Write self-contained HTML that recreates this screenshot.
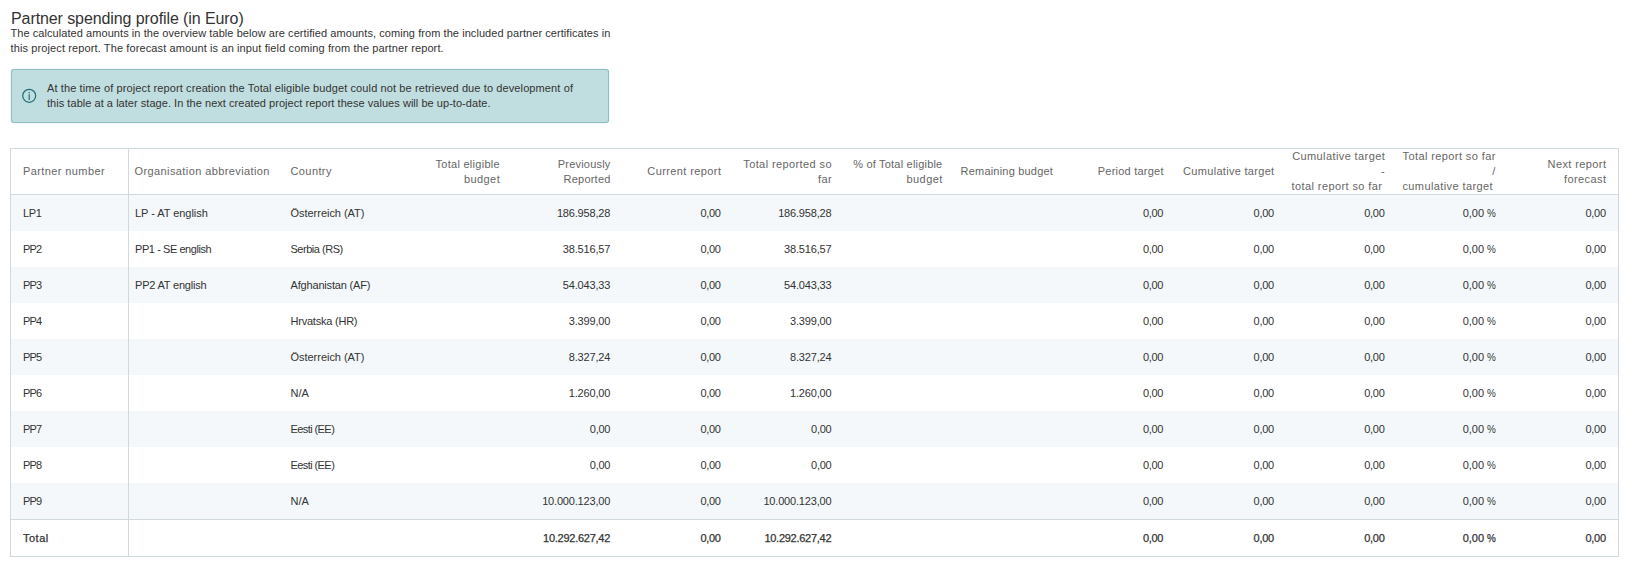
<!DOCTYPE html>
<html><head><meta charset="utf-8">
<style>
*{margin:0;padding:0;box-sizing:border-box}
html,body{width:1633px;height:571px;background:#fff;overflow:hidden}
body{font-family:"Liberation Sans",sans-serif;color:#333;position:relative;font-size:11px}
.a{position:absolute;white-space:nowrap}
.title{left:11px;top:6.6px;font-size:16px;line-height:24px;color:#333;letter-spacing:-0.09px}
.desc{left:10.5px;font-size:11px;line-height:15px;color:#333}
.info{left:11px;top:69px;width:598px;height:54px;background:#c0dddf;border:1px solid #8dbfc0;border-radius:3px;box-shadow:0 0 1px 0 rgba(70,140,140,0.55)}
.it{left:47px;font-size:11px;line-height:15px;color:#333}
.h{color:#666;line-height:15px;letter-spacing:0.4px;text-align:right}
.hl{text-align:left}
.d{line-height:36px;height:36px;text-align:right}
.dl{text-align:left}
.b{-webkit-text-stroke:0.25px #333;color:#333}
.hb{background:#d0d9dd}
</style></head><body>

<div class="a title">Partner spending profile (in Euro)</div>
<div class="a desc" style="top:26px;letter-spacing:0.066px">The calculated amounts in the overview table below are certified amounts, coming from the included partner certificates in</div>
<div class="a desc" style="top:41px;letter-spacing:0.115px">this project report. The forecast amount is an input field coming from the partner report.</div>
<div class="a info"></div>
<svg class="a" style="left:21px;top:88px" width="16" height="16" viewBox="0 0 16 16"><circle cx="8.2" cy="7.8" r="6.5" fill="none" stroke="#1f6f75" stroke-width="1.25"/><rect x="7.6" y="6.3" width="1.2" height="5.7" fill="#1f6f75"/><rect x="7.6" y="4" width="1.2" height="1.3" fill="#1f6f75"/></svg>
<div class="a it" style="top:81px;letter-spacing:0.11px">At the time of project report creation the Total eligible budget could not be retrieved due to development of</div>
<div class="a it" style="top:96px;letter-spacing:0.04px">this table at a later stage. In the next created project report these values will be up-to-date.</div>
<div class="a" style="left:11px;top:195px;width:1607px;height:36px;background:#f4f8fa"></div>
<div class="a" style="left:11px;top:267px;width:1607px;height:36px;background:#f4f8fa"></div>
<div class="a" style="left:11px;top:339px;width:1607px;height:36px;background:#f4f8fa"></div>
<div class="a" style="left:11px;top:411px;width:1607px;height:36px;background:#f4f8fa"></div>
<div class="a" style="left:11px;top:483px;width:1607px;height:36px;background:#f4f8fa"></div>
<div class="a hb" style="left:10px;top:148px;width:1609px;height:1px"></div>
<div class="a hb" style="left:10px;top:194px;width:1609px;height:1px"></div>
<div class="a hb" style="left:10px;top:519px;width:1609px;height:1px"></div>
<div class="a hb" style="left:10px;top:556px;width:1609px;height:1px"></div>
<div class="a hb" style="left:10px;top:148px;width:1px;height:409px"></div>
<div class="a hb" style="left:128px;top:148px;width:1px;height:409px"></div>
<div class="a hb" style="left:1618px;top:148px;width:1px;height:409px"></div>
<div class="a h hl" style="left:23px;top:164px">Partner number</div>
<div class="a h hl" style="left:134.5px;top:164px">Organisation abbreviation</div>
<div class="a h hl" style="left:290.5px;top:164px">Country</div>
<div class="a h" style="right:1133.3px;top:156.5px"><div style="letter-spacing:0.28px;margin-right:-0.28px">Total eligible</div><div style="letter-spacing:0.4px;margin-right:-0.4px">budget</div></div>
<div class="a h" style="right:1022.67px;top:156.5px"><div style="letter-spacing:0.2px;margin-right:-0.2px">Previously</div><div style="letter-spacing:0.21px;margin-right:-0.21px">Reported</div></div>
<div class="a h" style="right:912.04px;top:164.0px"><div style="letter-spacing:0.4px;margin-right:-0.4px">Current report</div></div>
<div class="a h" style="right:801.41px;top:156.5px"><div style="letter-spacing:0.4px;margin-right:-0.4px">Total reported so</div><div style="letter-spacing:0.4px;margin-right:-0.4px">far</div></div>
<div class="a h" style="right:690.78px;top:156.5px"><div style="letter-spacing:0.2px;margin-right:-0.2px">% of Total eligible</div><div style="letter-spacing:0.4px;margin-right:-0.4px">budget</div></div>
<div class="a h" style="right:580.1500000000001px;top:164.0px"><div style="letter-spacing:0.2px;margin-right:-0.2px">Remaining budget</div></div>
<div class="a h" style="right:469.52px;top:164.0px"><div style="letter-spacing:0.23px;margin-right:-0.23px">Period target</div></div>
<div class="a h" style="right:358.8899999999999px;top:164.0px"><div style="letter-spacing:0.3px;margin-right:-0.3px">Cumulative target</div></div>
<div class="a h" style="right:248.26px;top:149.0px"><div style="letter-spacing:0.4px;margin-right:-0.4px">Cumulative target</div><div style="letter-spacing:0.4px;margin-right:-0.4px">-</div><div style="letter-spacing:0.4px;margin-right:2.4px">total report so far</div></div>
<div class="a h" style="right:137.6300000000001px;top:149.0px"><div style="letter-spacing:0.4px;margin-right:-0.4px">Total report so far</div><div style="letter-spacing:0.4px;margin-right:-0.4px">/</div><div style="letter-spacing:0.4px;margin-right:2.4px">cumulative target</div></div>
<div class="a h" style="right:27.0px;top:156.5px"><div style="letter-spacing:0.4px;margin-right:-0.4px">Next report</div><div style="letter-spacing:0.4px;margin-right:-0.4px">forecast</div></div>
<div class="a d dl" style="left:23px;top:195px;letter-spacing:-0.4px">LP1</div>
<div class="a d dl" style="left:135px;top:195px;letter-spacing:-0.04px">LP - AT english</div>
<div class="a d dl" style="left:290.5px;top:195px;letter-spacing:-0.03px">Österreich (AT)</div>
<div class="a d" style="right:1022.8499999999999px;top:195px;letter-spacing:-0.18px">186.958,28</div>
<div class="a d" style="right:912.3399999999999px;top:195px;letter-spacing:-0.3px">0,00</div>
<div class="a d" style="right:801.5899999999999px;top:195px;letter-spacing:-0.18px">186.958,28</div>
<div class="a d" style="right:469.82px;top:195px;letter-spacing:-0.3px">0,00</div>
<div class="a d" style="right:359.1899999999999px;top:195px;letter-spacing:-0.3px">0,00</div>
<div class="a d" style="right:248.56px;top:195px;letter-spacing:-0.3px">0,00</div>
<div class="a d" style="right:137.6300000000001px;top:195px">0,00 <span style="display:inline-block;transform:scaleX(0.9);transform-origin:100% 50%;letter-spacing:0;margin-left:-1.5px">%</span></div>
<div class="a d" style="right:27.3px;top:195px;letter-spacing:-0.3px">0,00</div>
<div class="a d dl" style="left:23px;top:231px;letter-spacing:-0.8px">PP2</div>
<div class="a d dl" style="left:135px;top:231px;letter-spacing:-0.43px">PP1 - SE english</div>
<div class="a d dl" style="left:290.5px;top:231px;letter-spacing:-0.48px">Serbia (RS)</div>
<div class="a d" style="right:1022.8499999999999px;top:231px;letter-spacing:-0.18px">38.516,57</div>
<div class="a d" style="right:912.3399999999999px;top:231px;letter-spacing:-0.3px">0,00</div>
<div class="a d" style="right:801.5899999999999px;top:231px;letter-spacing:-0.18px">38.516,57</div>
<div class="a d" style="right:469.82px;top:231px;letter-spacing:-0.3px">0,00</div>
<div class="a d" style="right:359.1899999999999px;top:231px;letter-spacing:-0.3px">0,00</div>
<div class="a d" style="right:248.56px;top:231px;letter-spacing:-0.3px">0,00</div>
<div class="a d" style="right:137.6300000000001px;top:231px">0,00 <span style="display:inline-block;transform:scaleX(0.9);transform-origin:100% 50%;letter-spacing:0;margin-left:-1.5px">%</span></div>
<div class="a d" style="right:27.3px;top:231px;letter-spacing:-0.3px">0,00</div>
<div class="a d dl" style="left:23px;top:267px;letter-spacing:-0.8px">PP3</div>
<div class="a d dl" style="left:135px;top:267px;letter-spacing:-0.19px">PP2 AT english</div>
<div class="a d dl" style="left:290.5px;top:267px;letter-spacing:-0.17px">Afghanistan (AF)</div>
<div class="a d" style="right:1022.8499999999999px;top:267px;letter-spacing:-0.18px">54.043,33</div>
<div class="a d" style="right:912.3399999999999px;top:267px;letter-spacing:-0.3px">0,00</div>
<div class="a d" style="right:801.5899999999999px;top:267px;letter-spacing:-0.18px">54.043,33</div>
<div class="a d" style="right:469.82px;top:267px;letter-spacing:-0.3px">0,00</div>
<div class="a d" style="right:359.1899999999999px;top:267px;letter-spacing:-0.3px">0,00</div>
<div class="a d" style="right:248.56px;top:267px;letter-spacing:-0.3px">0,00</div>
<div class="a d" style="right:137.6300000000001px;top:267px">0,00 <span style="display:inline-block;transform:scaleX(0.9);transform-origin:100% 50%;letter-spacing:0;margin-left:-1.5px">%</span></div>
<div class="a d" style="right:27.3px;top:267px;letter-spacing:-0.3px">0,00</div>
<div class="a d dl" style="left:23px;top:303px;letter-spacing:-0.8px">PP4</div>
<div class="a d dl" style="left:290.5px;top:303px;letter-spacing:-0.22px">Hrvatska (HR)</div>
<div class="a d" style="right:1022.8499999999999px;top:303px;letter-spacing:-0.18px">3.399,00</div>
<div class="a d" style="right:912.3399999999999px;top:303px;letter-spacing:-0.3px">0,00</div>
<div class="a d" style="right:801.5899999999999px;top:303px;letter-spacing:-0.18px">3.399,00</div>
<div class="a d" style="right:469.82px;top:303px;letter-spacing:-0.3px">0,00</div>
<div class="a d" style="right:359.1899999999999px;top:303px;letter-spacing:-0.3px">0,00</div>
<div class="a d" style="right:248.56px;top:303px;letter-spacing:-0.3px">0,00</div>
<div class="a d" style="right:137.6300000000001px;top:303px">0,00 <span style="display:inline-block;transform:scaleX(0.9);transform-origin:100% 50%;letter-spacing:0;margin-left:-1.5px">%</span></div>
<div class="a d" style="right:27.3px;top:303px;letter-spacing:-0.3px">0,00</div>
<div class="a d dl" style="left:23px;top:339px;letter-spacing:-0.8px">PP5</div>
<div class="a d dl" style="left:290.5px;top:339px;letter-spacing:-0.03px">Österreich (AT)</div>
<div class="a d" style="right:1022.8499999999999px;top:339px;letter-spacing:-0.18px">8.327,24</div>
<div class="a d" style="right:912.3399999999999px;top:339px;letter-spacing:-0.3px">0,00</div>
<div class="a d" style="right:801.5899999999999px;top:339px;letter-spacing:-0.18px">8.327,24</div>
<div class="a d" style="right:469.82px;top:339px;letter-spacing:-0.3px">0,00</div>
<div class="a d" style="right:359.1899999999999px;top:339px;letter-spacing:-0.3px">0,00</div>
<div class="a d" style="right:248.56px;top:339px;letter-spacing:-0.3px">0,00</div>
<div class="a d" style="right:137.6300000000001px;top:339px">0,00 <span style="display:inline-block;transform:scaleX(0.9);transform-origin:100% 50%;letter-spacing:0;margin-left:-1.5px">%</span></div>
<div class="a d" style="right:27.3px;top:339px;letter-spacing:-0.3px">0,00</div>
<div class="a d dl" style="left:23px;top:375px;letter-spacing:-0.8px">PP6</div>
<div class="a d dl" style="left:290.5px;top:375px">N/A</div>
<div class="a d" style="right:1022.8499999999999px;top:375px;letter-spacing:-0.18px">1.260,00</div>
<div class="a d" style="right:912.3399999999999px;top:375px;letter-spacing:-0.3px">0,00</div>
<div class="a d" style="right:801.5899999999999px;top:375px;letter-spacing:-0.18px">1.260,00</div>
<div class="a d" style="right:469.82px;top:375px;letter-spacing:-0.3px">0,00</div>
<div class="a d" style="right:359.1899999999999px;top:375px;letter-spacing:-0.3px">0,00</div>
<div class="a d" style="right:248.56px;top:375px;letter-spacing:-0.3px">0,00</div>
<div class="a d" style="right:137.6300000000001px;top:375px">0,00 <span style="display:inline-block;transform:scaleX(0.9);transform-origin:100% 50%;letter-spacing:0;margin-left:-1.5px">%</span></div>
<div class="a d" style="right:27.3px;top:375px;letter-spacing:-0.3px">0,00</div>
<div class="a d dl" style="left:23px;top:411px;letter-spacing:-0.8px">PP7</div>
<div class="a d dl" style="left:290.5px;top:411px;letter-spacing:-0.58px">Eesti (EE)</div>
<div class="a d" style="right:1022.9699999999999px;top:411px;letter-spacing:-0.3px">0,00</div>
<div class="a d" style="right:912.3399999999999px;top:411px;letter-spacing:-0.3px">0,00</div>
<div class="a d" style="right:801.7099999999999px;top:411px;letter-spacing:-0.3px">0,00</div>
<div class="a d" style="right:469.82px;top:411px;letter-spacing:-0.3px">0,00</div>
<div class="a d" style="right:359.1899999999999px;top:411px;letter-spacing:-0.3px">0,00</div>
<div class="a d" style="right:248.56px;top:411px;letter-spacing:-0.3px">0,00</div>
<div class="a d" style="right:137.6300000000001px;top:411px">0,00 <span style="display:inline-block;transform:scaleX(0.9);transform-origin:100% 50%;letter-spacing:0;margin-left:-1.5px">%</span></div>
<div class="a d" style="right:27.3px;top:411px;letter-spacing:-0.3px">0,00</div>
<div class="a d dl" style="left:23px;top:447px;letter-spacing:-0.8px">PP8</div>
<div class="a d dl" style="left:290.5px;top:447px;letter-spacing:-0.58px">Eesti (EE)</div>
<div class="a d" style="right:1022.9699999999999px;top:447px;letter-spacing:-0.3px">0,00</div>
<div class="a d" style="right:912.3399999999999px;top:447px;letter-spacing:-0.3px">0,00</div>
<div class="a d" style="right:801.7099999999999px;top:447px;letter-spacing:-0.3px">0,00</div>
<div class="a d" style="right:469.82px;top:447px;letter-spacing:-0.3px">0,00</div>
<div class="a d" style="right:359.1899999999999px;top:447px;letter-spacing:-0.3px">0,00</div>
<div class="a d" style="right:248.56px;top:447px;letter-spacing:-0.3px">0,00</div>
<div class="a d" style="right:137.6300000000001px;top:447px">0,00 <span style="display:inline-block;transform:scaleX(0.9);transform-origin:100% 50%;letter-spacing:0;margin-left:-1.5px">%</span></div>
<div class="a d" style="right:27.3px;top:447px;letter-spacing:-0.3px">0,00</div>
<div class="a d dl" style="left:23px;top:483px;letter-spacing:-0.8px">PP9</div>
<div class="a d dl" style="left:290.5px;top:483px">N/A</div>
<div class="a d" style="right:1022.8499999999999px;top:483px;letter-spacing:-0.18px">10.000.123,00</div>
<div class="a d" style="right:912.3399999999999px;top:483px;letter-spacing:-0.3px">0,00</div>
<div class="a d" style="right:801.5899999999999px;top:483px;letter-spacing:-0.18px">10.000.123,00</div>
<div class="a d" style="right:469.82px;top:483px;letter-spacing:-0.3px">0,00</div>
<div class="a d" style="right:359.1899999999999px;top:483px;letter-spacing:-0.3px">0,00</div>
<div class="a d" style="right:248.56px;top:483px;letter-spacing:-0.3px">0,00</div>
<div class="a d" style="right:137.6300000000001px;top:483px">0,00 <span style="display:inline-block;transform:scaleX(0.9);transform-origin:100% 50%;letter-spacing:0;margin-left:-1.5px">%</span></div>
<div class="a d" style="right:27.3px;top:483px;letter-spacing:-0.3px">0,00</div>
<div class="a d dl b" style="left:23px;top:520px;letter-spacing:0.5px">Total</div>
<div class="a d b" style="right:1022.93px;top:520px;letter-spacing:-0.26px">10.292.627,42</div>
<div class="a d b" style="right:912.3399999999999px;top:520px;letter-spacing:-0.3px">0,00</div>
<div class="a d b" style="right:801.67px;top:520px;letter-spacing:-0.26px">10.292.627,42</div>
<div class="a d b" style="right:469.82px;top:520px;letter-spacing:-0.3px">0,00</div>
<div class="a d b" style="right:359.1899999999999px;top:520px;letter-spacing:-0.3px">0,00</div>
<div class="a d b" style="right:248.56px;top:520px;letter-spacing:-0.3px">0,00</div>
<div class="a d b" style="right:137.6300000000001px;top:520px">0,00 <span style="display:inline-block;transform:scaleX(0.9);transform-origin:100% 50%;letter-spacing:0;margin-left:-1.5px">%</span></div>
<div class="a d b" style="right:27.3px;top:520px;letter-spacing:-0.3px">0,00</div>
</body></html>
